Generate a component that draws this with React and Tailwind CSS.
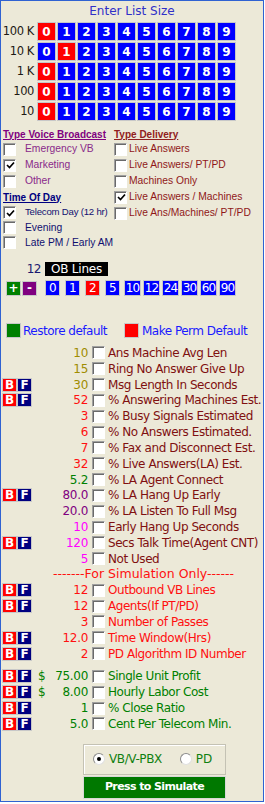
import React from "react";

const dv = "font-['DejaVu_Sans',Verdana,sans-serif]";
const ar = "font-['Liberation_Sans',Arial,sans-serif]";

const sizes = ["100 K", "10 K", "1 K", "100", "10"];
const picked = [0, 1, 0, 0, 0];
const digits = [0, 1, 2, 3, 4, 5, 6, 7, 8, 9];

const olive = "text-[#a08c00]";
const red = "text-[#ff1010]";
const green = "text-[#008000]";
const purple = "text-[#800080]";
const magenta = "text-[#ff00ff]";
const maroon = "text-[#801010]";

const rows = [
  { v: "10", vc: olive, l: "Ans Machine Avg Len", lc: maroon },
  { v: "15", vc: olive, l: "Ring No Answer Give Up", lc: maroon },
  { bf: true, v: "30", vc: olive, l: "Msg Length In Seconds", lc: maroon },
  { bf: true, v: "52", vc: red, l: "% Answering Machines Est.", lc: maroon },
  { v: "3", vc: red, l: "% Busy Signals Estimated", lc: maroon },
  { v: "6", vc: red, l: "% No Answers Estimated.", lc: maroon },
  { v: "7", vc: red, l: "% Fax and Disconnect Est.", lc: maroon },
  { v: "32", vc: red, l: "% Live Answers(LA) Est.", lc: maroon },
  { v: "5.2", vc: green, l: "% LA Agent Connect", lc: maroon },
  { bf: true, v: "80.0", vc: purple, l: "% LA Hang Up Early", lc: maroon },
  { v: "20.0", vc: purple, l: "% LA Listen To Full Msg", lc: maroon },
  { v: "10", vc: magenta, l: "Early Hang Up Seconds", lc: maroon },
  { bf: true, v: "120", vc: magenta, l: "Secs Talk Time(Agent CNT)", lc: maroon },
  { v: "5", vc: magenta, l: "Not Used", lc: maroon },
  { sim: true },
  { bf: true, v: "12", vc: red, l: "Outbound VB Lines", lc: red },
  { bf: true, v: "12", vc: red, l: "Agents(If PT/PD)", lc: red },
  { v: "3", vc: red, l: "Number of Passes", lc: red },
  { bf: true, v: "12.0", vc: red, l: "Time Window(Hrs)", lc: red },
  { bf: true, v: "2", vc: red, l: "PD Algorithm ID Number", lc: red },
];

const money = [
  { bf: true, d: true, v: "75.00", l: "Single Unit Profit" },
  { bf: true, d: true, v: "8.00", l: "Hourly Labor Cost" },
  { bf: true, v: "1", l: "% Close Ratio" },
  { bf: true, v: "5.0", l: "Cent Per Telecom Min." },
];

function Check({ on }) {
  return (
    <span className="w-[13px] h-[13px] shrink-0 flex border border-t-[#a0a0a0] border-l-[#a0a0a0] border-r-white border-b-white">
      <span className="flex-1 flex items-center justify-center bg-white border-t border-l border-t-[#6a6a6a] border-l-[#6a6a6a]">
        {on && (
          <svg width="9" height="9" viewBox="0 0 9 9">
            <path d="M1 4 L3.5 6.5 L8 1.5" fill="none" stroke="#000" strokeWidth="1.7" />
          </svg>
        )}
      </span>
    </span>
  );
}

function Opt({ on, label, color, gap }) {
  return (
    <div className="h-[16px] flex items-center">
      <Check on={on} />
      <span className={`${gap} ${color} ${ar} text-[10.3px] whitespace-nowrap`}>{label}</span>
    </div>
  );
}

function BF() {
  return (
    <div className="flex ml-[1px]">
      <div className={`w-[15px] h-[14px] bg-[#ff0000] border border-[#c8c8c8] flex items-center justify-center text-white font-bold text-[12px] ${dv}`}>B</div>
      <div className={`w-[15px] h-[14px] bg-[#000080] border border-[#c8c8c8] flex items-center justify-center text-white font-bold text-[12px] ${dv}`}>F</div>
    </div>
  );
}

function DataRow({ r }) {
  return (
    <div className="h-[15.84px] flex items-center">
      <div className="w-[36px] shrink-0">{r.bf && <BF />}</div>
      <div className={`w-[51px] shrink-0 flex justify-between items-center ${r.vc} ${dv} text-[12px] tracking-[-0.3px]`}>
        <span className="pl-[1px]">{r.d ? "$" : ""}</span>
        <span>{r.v}</span>
      </div>
      <div className="ml-[4px]">
        <Check />
      </div>
      <span className={`ml-[3px] ${r.lc} ${dv} text-[12px] tracking-[-0.45px] whitespace-nowrap`}>{r.l}</span>
    </div>
  );
}

function NumBtn({ n, color, wide }) {
  return (
    <div
      className={`${wide ? "w-[17px]" : "w-[15px]"} h-[16px] ${color} border border-[#c8c8c8] flex items-center justify-center text-white text-[12px] tracking-[-0.8px] ${dv}`}
    >
      {n}
    </div>
  );
}

export default function App() {
  return (
    <div className="w-[264px] h-[802px] bg-[#ece9d8] border border-[#2f62d2] overflow-hidden">
      <div className={`h-[20px] leading-[20px] text-center text-[12px] text-[#3030c8] ${dv}`}>Enter List Size</div>

      <div className="mt-[1px] flex flex-col gap-[1px]">
        {sizes.map((s, r) => (
          <div key={s} className="h-[19px] flex items-center">
            <div className={`w-[34px] shrink-0 flex justify-end whitespace-nowrap text-[11.5px] text-[#1e1a14] pr-[1px] tracking-[-0.4px] ${dv}`}>{s}</div>
            <div className="ml-[2px] flex gap-[1px]">
              {digits.map((d) => (
                <div
                  key={d}
                  className={`w-[19px] h-[19px] border border-[#c8c8c8] flex items-center justify-center text-white font-bold text-[12px] ${dv} ${
                    d === picked[r] ? "bg-[#ff0000]" : "bg-[#0000ff]"
                  }`}
                >
                  {d}
                </div>
              ))}
            </div>
          </div>
        ))}
      </div>

      <div className="mt-[6px] flex">
        <div className="w-[113px] shrink-0 pl-[2px]">
          <div className={`h-[14px] flex items-center font-bold underline text-[10px] text-[#800080] ${ar}`}>Type Voice Broadcast</div>
          <Opt label="Emergency VB" color="text-[#8a2a8a]" gap="ml-[9px]" />
          <Opt on label="Marketing" color="text-[#8a2a8a]" gap="ml-[9px]" />
          <Opt label="Other" color="text-[#8a2a8a]" gap="ml-[9px]" />
          <div className={`h-[16px] flex items-center font-bold underline text-[10px] text-[#000080] ${ar}`}>Time Of Day</div>
          <div className="h-[15px] flex items-center">
            <Check on />
            <span className={`ml-[9px] text-[#101070] ${ar} text-[9.6px] tracking-[-0.2px] whitespace-nowrap`}>Telecom Day (12 hr)</span>
          </div>
          <div className="h-[15px] flex items-center">
            <Check />
            <span className={`ml-[9px] text-[#101070] ${ar} text-[10.3px]`}>Evening</span>
          </div>
          <div className="h-[15px] flex items-center">
            <Check />
            <span className={`ml-[9px] text-[#101070] ${ar} text-[10.3px] whitespace-nowrap`}>Late PM / Early AM</span>
          </div>
        </div>
        <div>
          <div className={`h-[14px] flex items-center font-bold underline text-[10px] text-[#902020] ${ar}`}>Type Delivery</div>
          <Opt label="Live Answers" color="text-[#901818]" gap="ml-[2px]" />
          <Opt label="Live Answers/ PT/PD" color="text-[#901818]" gap="ml-[2px]" />
          <Opt label="Machines Only" color="text-[#901818]" gap="ml-[2px]" />
          <Opt on label="Live Answers / Machines" color="text-[#901818]" gap="ml-[2px]" />
          <Opt label="Live Ans/Machines/  PT/PD" color="text-[#901818]" gap="ml-[2px]" />
        </div>
      </div>

      <div className="mt-[12px] h-[14px] flex items-center">
        <div className={`w-[41px] text-right pr-[1px] text-[12px] tracking-[-0.5px] text-[#1a1a70] ${dv}`}>12</div>
        <div className={`ml-[3px] w-[63px] h-[14px] bg-black text-white text-[12px] tracking-[-0.2px] flex items-center justify-center ${dv}`}>OB Lines</div>
      </div>

      <div className="mt-[4px] h-[16px] flex items-center">
        <div className={`ml-[5px] w-[15px] h-[15px] bg-[#008000] border border-[#c8c8c8] flex items-center justify-center text-white font-bold text-[12px] ${dv}`}>+</div>
        <div className={`ml-[1px] w-[15px] h-[15px] bg-[#800080] border border-[#c8c8c8] flex items-center justify-center text-white font-bold text-[12px] ${dv}`}>-</div>
        <div className="ml-[8px] flex gap-[5px]">
          <NumBtn n="0" color="bg-[#0000ff]" />
          <NumBtn n="1" color="bg-[#0000ff]" />
          <NumBtn n="2" color="bg-[#ff0000]" />
          <NumBtn n="5" color="bg-[#0000ff]" />
        </div>
        <div className="ml-[4px] flex gap-[2px]">
          {["10", "12", "24", "30", "60", "90"].map((n) => (
            <NumBtn key={n} n={n} color="bg-[#0000ff]" wide />
          ))}
        </div>
      </div>

      <div className="mt-[27px] h-[15px] flex items-center">
        <div className="ml-[5px] w-[15px] h-[15px] bg-[#008000] border border-[#c8c8c8]" />
        <div className={`ml-[2px] w-[101px] text-[12px] tracking-[-0.5px] text-[#1a1aff] whitespace-nowrap ${dv}`}>Restore default</div>
        <div className="w-[15px] h-[15px] bg-[#ff0000] border border-[#c8c8c8]" />
        <div className={`ml-[3px] text-[12px] tracking-[-0.5px] text-[#1a1aff] whitespace-nowrap ${dv}`}>Make Perm Default</div>
      </div>

      <div className="mt-[7px]">
        {rows.map((r, i) =>
          r.sim ? (
            <div key={i} className={`h-[15.84px] flex items-center pl-[52px] text-[12.5px] text-[#ff1010] whitespace-nowrap ${dv}`}>
              -------For Simulation Only------
            </div>
          ) : (
            <DataRow key={i} r={r} />
          )
        )}
      </div>

      <div className="mt-[7px]">
        {money.map((r, i) => (
          <DataRow key={i} r={{ ...r, vc: green, lc: green }} />
        ))}
      </div>

      <div className="mt-[12px] ml-[82px] w-[143px] h-[31px] border border-[#c4c2b4] shadow-[inset_1px_1px_0_#ffffff] flex items-center">
        <span className="ml-[9px] w-[12px] h-[12px] rounded-full bg-white border border-t-[#8c8c8c] border-l-[#8c8c8c] border-r-[#e0e0e0] border-b-[#e0e0e0] flex items-center justify-center">
          <span className="w-[4px] h-[4px] rounded-full bg-black" />
        </span>
        <span className={`ml-[4px] text-[12px] tracking-[-0.4px] text-[#108010] ${dv}`}>VB/V-PBX</span>
        <span className="ml-[18px] w-[12px] h-[12px] rounded-full bg-white border border-t-[#8c8c8c] border-l-[#8c8c8c] border-r-[#e0e0e0] border-b-[#e0e0e0]" />
        <span className={`ml-[4px] text-[12px] text-[#108010] ${dv}`}>PD</span>
      </div>

      <div className={`mt-[1px] ml-[82px] w-[143px] h-[23px] bg-[#007800] border border-[#d8d8d8] flex items-center justify-center text-white font-bold text-[11px] tracking-[-0.6px] ${dv}`}>
        Press to Simulate
      </div>
    </div>
  );
}
